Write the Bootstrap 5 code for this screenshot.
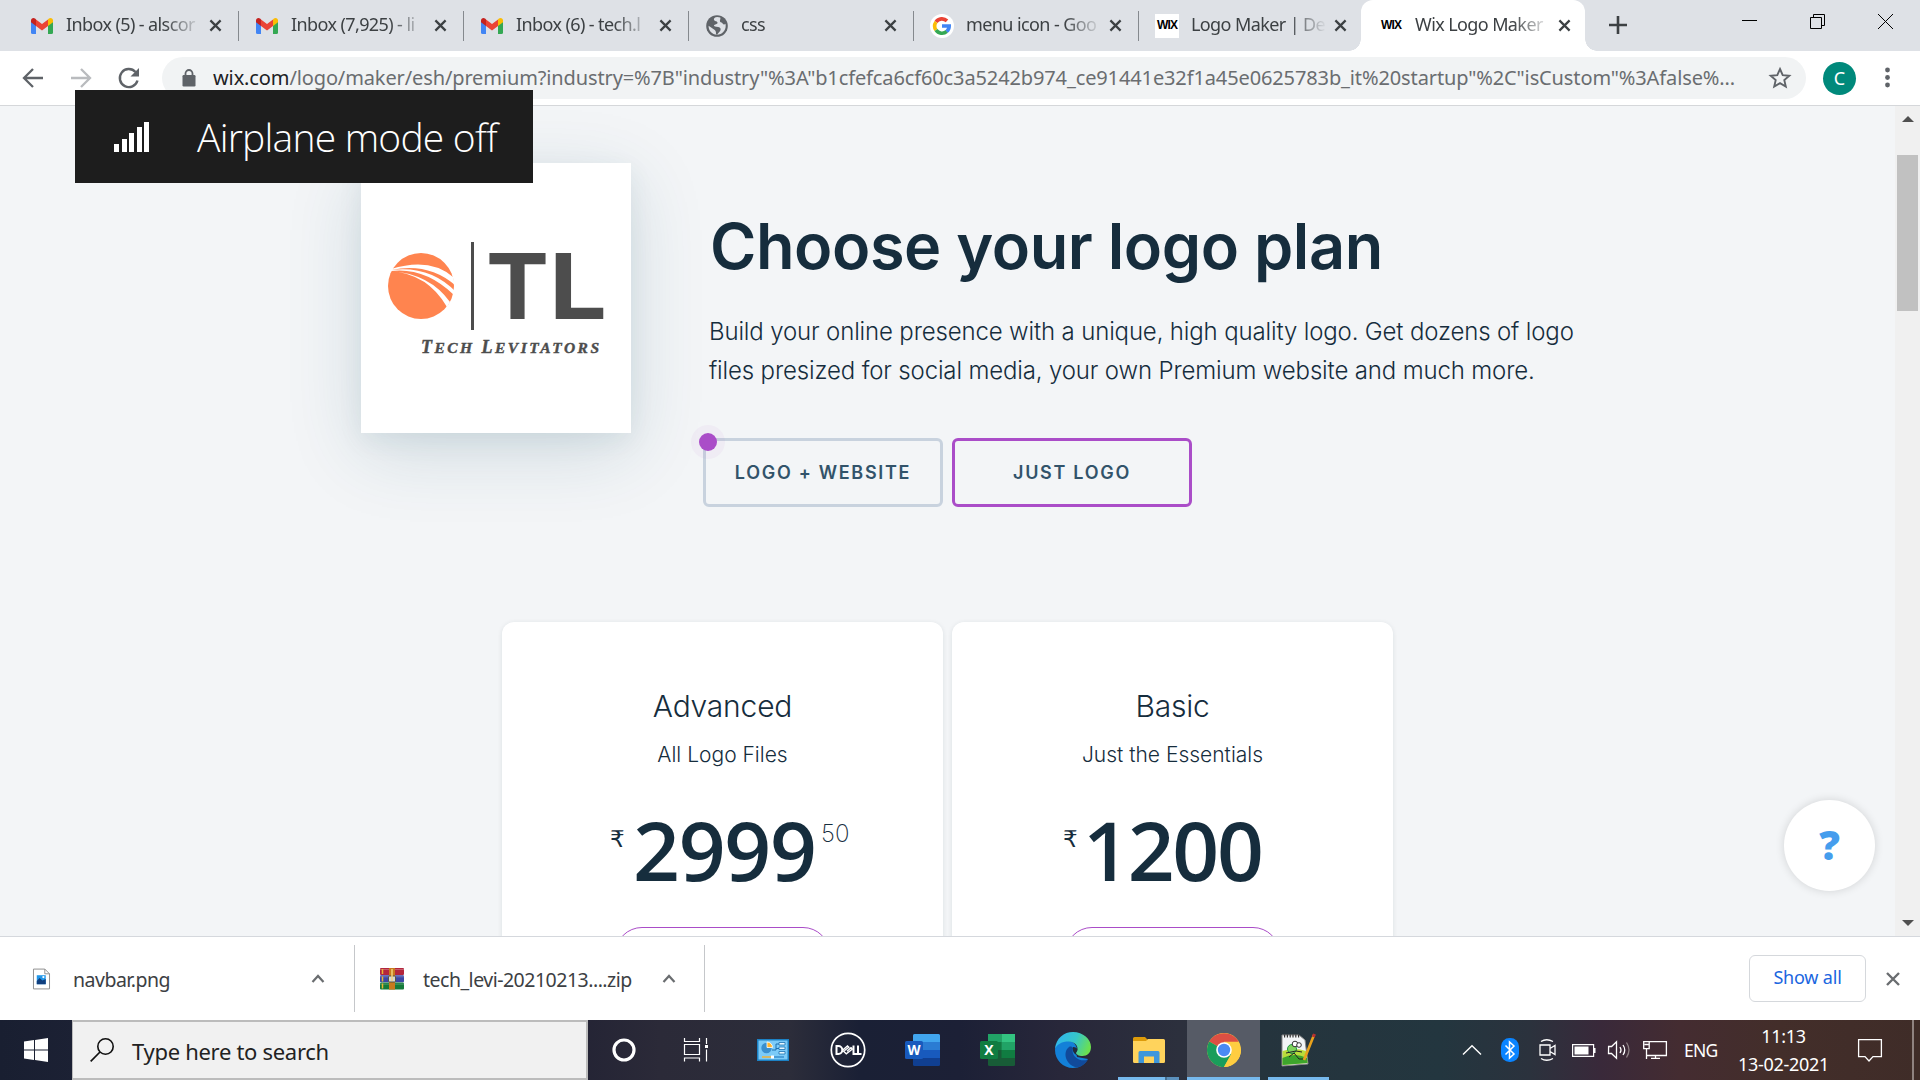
<!DOCTYPE html>
<html lang="en">
<head>
<meta charset="utf-8">
<title>Wix Logo Maker</title>
<link href="https://cdn.jsdelivr.net/npm/bootstrap@5.3.0/dist/css/bootstrap.min.css" rel="stylesheet">
<style>
body{width:1920px;height:1080px;overflow:hidden;font-family:"Noto Sans","Open Sans",sans-serif;background:#fff;color:#3c4043}
svg{display:block;flex:none;overflow:visible}
.tabstrip{height:51px;background:#dee1e6;padding-left:13px}
.tab-item{width:225px;height:51px;padding-left:18px;position:relative;font-size:18px;letter-spacing:-.6px;flex:none}
.tab-item .fav{width:24px;height:24px;margin-left:-1px;flex:none}
.tab-item .fav svg{margin:auto}
.tab-sep::after{content:"";position:absolute;right:-1px;top:11px;width:1.5px;height:30px;background:#85898e}
.tab-label{width:143px;flex:none;margin-left:12px;white-space:nowrap;line-height:30px;margin-top:-3px;-webkit-mask-image:linear-gradient(90deg,#000 98px,transparent 136px);mask-image:linear-gradient(90deg,#000 98px,transparent 136px)}
.tab-live{background:#fff;border-radius:12px 12px 0 0;width:224px;margin-left:-2px}
.tab-live .fav{margin-left:0}
.tab-live::before,.tab-live::after{content:"";position:absolute;bottom:0;width:12px;height:12px}
.tab-live::before{left:-12px;background:radial-gradient(circle at 0 0,transparent 11.5px,#fff 12px)}
.tab-live::after{right:-12px;background:radial-gradient(circle at 100% 0,transparent 11.5px,#fff 12px)}
.wixmark{width:24px;height:24px;background:#fff;color:#000;font:bold 12px/23px "Liberation Sans",sans-serif;letter-spacing:-.9px;text-align:center}
.win-ctl{gap:53px;padding-top:14px;margin-right:27px}
.toolbar{height:55px;border-bottom:1px solid #d5d7da;padding:0 19px 0 21px}
.nav-ico{gap:24px}
.omni{width:1644px;height:42px;background:#f1f3f4;border-radius:21px;padding:0 15px 0 19px;margin-left:21px;flex:none}
.url{font-size:20px;letter-spacing:-.122px;line-height:42px;margin-left:16px;color:#6a6d70;white-space:nowrap;width:1522px}
.url b{font-weight:400;color:#202124}
.avatar-c{width:33px;height:33px;border-radius:50%;background:#00897b;color:#fff;font-size:18px;line-height:32px;text-align:center;margin-left:17px;margin-right:29px;flex:none}
.viewport{height:830px;background:#f3f5f7;overflow:hidden;position:relative}
.page-body{width:1895px;height:830px;overflow:hidden;position:relative}
.vscroll{width:25px;height:830px;background:#f0f0f0;padding:10px 2px 10px 2px}
.thumb{width:21px;height:156px;background:#c1c1c1;margin-top:33px}
.hero{padding:57px 0 0 361px}
.logo-box{width:270px;height:270px;background:#fff;box-shadow:0 18px 70px rgba(22,80,105,.16),0 8px 24px rgba(22,80,105,.07)}
.hero-copy{margin-left:72px;padding-top:40px;color:#162d3d;font-family:Inter,"Noto Sans",sans-serif}
.hero-copy h1{font-size:63px;font-weight:600;line-height:86px;letter-spacing:-.45px;margin:0 0 0 7px;white-space:nowrap}
.hero-copy p{font-size:24px;font-weight:300;line-height:39px;letter-spacing:-.15px;margin:23px 0 0 6px;white-space:nowrap}
.plan-btns{margin-top:48px;gap:9px}
.plan-btn{width:240px;height:69px;border:3px solid #c8d2de;border-radius:6px;color:#32536a;font:600 18px/63px Inter,sans-serif;letter-spacing:1.7px;text-align:center;position:relative}
.plan-btn.on{border-color:#aa4dc8}
.dot{position:absolute;left:-7px;top:-8px;width:18px;height:18px;border-radius:50%;background:#aa4dc8;box-shadow:0 0 0 8px rgba(170,77,200,.05)}
.plans{padding:115px 0 0 502px;gap:9px}
.plan-card{width:441px;height:420px;background:#fff;border-radius:12px;box-shadow:0 1px 5px rgba(22,45,61,.1);padding-top:63px;color:#162d3d;font-family:Inter,"Noto Sans",sans-serif;font-weight:300}
.plan-card h2{font-size:30px;font-weight:300;line-height:42px;letter-spacing:-.2px;margin:0}
.plan-card .sub{font-size:21px;line-height:30px;margin-top:13px}
.price{margin-top:31px;height:110px;width:441px;padding-left:108px}
.price-b{padding-left:111px}
.price .cur{font:400 23px/30px "DejaVu Sans",sans-serif;padding-top:23px;width:14px}
.price .amt{font-family:"Open Sans",sans-serif;font-size:82px;font-weight:600;line-height:110px;letter-spacing:-1.2px;margin:-7px 0 0 9px;width:183px;white-space:nowrap}
.price-b .amt{letter-spacing:-2.2px;margin-left:6px}
.price .cents{font-size:24px;line-height:30px;padding-top:18px;margin-left:5px;font-weight:200}
.pill{width:215px;height:54px;border:1.5px solid #aa4dc8;border-radius:27px;margin:16px auto 0}
.help{position:absolute;left:1784px;top:694px;width:91px;height:91px;border-radius:50%;background:#fff;box-shadow:0 0 10px rgba(0,0,0,.14);color:#459ded;font:800 41px/89px "Open Sans",sans-serif;text-align:center}
.shelf{height:84px;border-top:1px solid #d5d8dd;font-size:19.5px;padding-right:20px}
.dl{height:67px;letter-spacing:-.5px}
.dl .fname{padding-top:2px}
.dl-a{width:355px;border-right:1px solid #c5c7ca;padding:0 29px 0 33px}
.dl-a .fname{margin-left:23px}
.dl-b{width:350px;border-right:1px solid #c5c7ca;padding:0 28px 0 25px}
.dl-b .fname{margin-left:19px}
.showall{width:117px;height:47px;border:1px solid #d5d8dc;border-radius:6px;color:#1a66e0;font-size:18px;letter-spacing:-.2px;line-height:43px;text-align:center;margin-right:20px}
.taskbar{height:60px;background:linear-gradient(90deg,#191f31 0,#1c2134 80px,#242435 580px,#2b2a38 660px,#2c2d3a 790px,#1a2035 860px,#1c2036 960px,#28273a 1060px,#2c303d 1180px,#25343d 1260px,#23363f 1440px,#2b323d 1530px,#39293a 1600px,#442c31 1680px,#432e2a 1780px,#3f2c28 1920px);color:#fff}
.start{width:72px}
.searchbox{width:516px;height:60px;background:#f1f1f1;border:2px solid #bcbcbc;border-left-width:1px;color:#222;padding-left:17px;font-size:22px;letter-spacing:-.3px}
.searchbox span{margin-left:18px;padding-top:2px}
.app{height:60px;flex:none;position:relative}
.app svg{margin:auto}
.w-a{width:72px}.w-b{width:82px}.w-c{width:68px}.w-d{width:81px}.w-e{width:69px}.w-f{width:61px}.w-g{width:73px}
.run::after{content:"";position:absolute;left:0;right:0;bottom:0;height:3px;background:#76b9ed}
.run-two::after{background:linear-gradient(90deg,#76b9ed 47px,#456f91 47px,#456f91 49px,#5b90bc 49px)}
.app.live{background:#565b66;margin:0 8px}
.tray{font-size:17.5px;flex:none}
.tray-ico{gap:12px;margin-right:17px}
.lang{letter-spacing:-.8px;width:34px}
.clock{width:95px;line-height:28px;text-align:center;font-size:18px;letter-spacing:-.3px;margin:0 27px 0 18px}
.peek{width:2px;height:60px;background:#8f8280;margin:0 6px 0 30px}
.toast-box{position:absolute;left:75px;top:90px;width:458px;height:93px;background:#1d1d1d;color:#fff;padding-left:39px;font-family:"Open Sans",sans-serif;font-weight:300;font-size:39px;letter-spacing:-.78px;z-index:5}
.toast-box span{margin-left:47px;padding-top:1px;white-space:nowrap}
</style>
</head>
<body class="d-flex flex-column">
<svg width="0" height="0" class="position-absolute">
<defs>
<symbol id="x" viewBox="0 0 14 14"><path d="M1.5 1.5l11 11M12.5 1.5l-11 11" stroke="#3c4043" stroke-width="2.4"/></symbol>
<symbol id="gmail" viewBox="0 0 22 16"><path d="M0 2v12.500A1.500 1.500 0 001.500 16H5V5z" fill="#4285f4"/><path d="M22 2v12.500A1.500 1.500 0 0120.500 16H17V5z" fill="#34a853"/><path d="M17 1.500V8l5-3.800V2.500C22 .2 19.500-.8 17.600.8z" fill="#fbbc04"/><path d="M5 8V1.500L11 6l6-4.500V8l-6 4.500z" fill="#ea4335"/><path d="M0 2.500V4.200L5 8V1.500L4.400.8C2.500-.8 0 .2 0 2.500z" fill="#c5221f"/></symbol>
<symbol id="up" viewBox="0 0 14 9"><path d="M1.500 8L7 2l5.500 6" fill="none" stroke="#6a6d70" stroke-width="2.200"/></symbol>
</defs></svg>

<header class="tabstrip d-flex">
<div class="tab-item tab-sep d-flex align-items-center"><div class="fav d-flex"><svg width="22" height="16"><use href="#gmail"/></svg></div><div class="tab-label">Inbox (5) - alscor</div><svg width="13" height="13"><use href="#x"/></svg></div>
<div class="tab-item tab-sep d-flex align-items-center"><div class="fav d-flex"><svg width="22" height="16"><use href="#gmail"/></svg></div><div class="tab-label">Inbox (7,925) - li</div><svg width="13" height="13"><use href="#x"/></svg></div>
<div class="tab-item tab-sep d-flex align-items-center"><div class="fav d-flex"><svg width="22" height="16"><use href="#gmail"/></svg></div><div class="tab-label">Inbox (6) - tech.l</div><svg width="13" height="13"><use href="#x"/></svg></div>
<div class="tab-item tab-sep d-flex align-items-center"><div class="fav d-flex"><svg width="22" height="22" viewBox="0 0 22 22"><circle cx="11" cy="11" r="10.800" fill="#5f6368"/><path d="M11.500 2c-3 0-4 1.500-3.500 3 .6 1.600 3 .8 3.500 2.400.4 1.500-2 1.700-3.200 2.600-1 .8 0 1.600 2 1.800 3 .2 4.500.6 4.300 3-.2 2-2.300 2.700-3.300 4.800l-1.300-.3c.2-2.500-.3-3.600-1.600-4.600L2.600 10.800C2.400 15.600 6 19.600 11 19.800c5-.2 8.700-4 8.700-8.800 0-.8-.1-1.500-.3-2.200-1 1-2.300.6-2.800-.4-.5-1.200-1.900-.5-2.500-1.600-.7-1.300.8-2.300.2-4.200z" fill="#dee1e6"/></svg></div><div class="tab-label">css</div><svg width="13" height="13"><use href="#x"/></svg></div>
<div class="tab-item tab-sep d-flex align-items-center"><div class="fav d-flex"><svg width="24" height="24" viewBox="0 0 24 24"><circle cx="12" cy="12" r="12" fill="#fff"/><g fill="none" stroke-width="3.600"><path d="M17 6.900A7.200 7.200 0 006 8" stroke="#ea4335"/><path d="M6 16.100a7.300 7.300 0 010-8.200" stroke="#fbbc04"/><path d="M16.800 17.400A7.200 7.200 0 016 16" stroke="#34a853"/><path d="M12 12h7.200c0 2.400-1 4.200-2.500 5.500" stroke="#4285f4"/></g></svg></div><div class="tab-label">menu icon - Goo</div><svg width="13" height="13"><use href="#x"/></svg></div>
<div class="tab-item d-flex align-items-center"><div class="wixmark fav">WIX</div><div class="tab-label">Logo Maker | De</div><svg width="13" height="13"><use href="#x"/></svg></div>
<div class="tab-item tab-live d-flex align-items-center"><div class="wixmark fav">WIX</div><div class="tab-label">Wix Logo Maker</div><svg width="13" height="13"><use href="#x"/></svg></div>
<svg class="ms-4 mt-3" width="18" height="18" viewBox="0 0 18 18"><path d="M9 0v18M0 9h18" stroke="#3c4043" stroke-width="2.600"/></svg>
<div class="win-ctl d-flex ms-auto">
<svg width="15" height="15"><path d="M0 6.500h15" stroke="#000"/></svg>
<svg width="15" height="15"><path d="M.5 3.500h11v11H.500zM3.500 3V.500h11v11H12" fill="none" stroke="#000"/></svg>
<svg width="15" height="15"><path d="M0 0l15 15M15 0L0 15" stroke="#000"/></svg>
</div>
</header>

<nav class="toolbar d-flex align-items-center">
<div class="nav-ico d-flex">
<svg width="24" height="24" viewBox="0 0 24 24"><path d="M22 12H3.500M12 3L3 12l9 9" fill="none" stroke="#5f6368" stroke-width="2.300"/></svg>
<svg width="24" height="24" viewBox="0 0 24 24"><path d="M2 12h18.500M12 3l9 9-9 9" fill="none" stroke="#b9bbbe" stroke-width="2.300"/></svg>
<svg width="24" height="24" viewBox="0 0 24 24"><path d="M20.500 14.500A9 9 0 1118.500 6" fill="none" stroke="#5f6368" stroke-width="2.400"/><path d="M22 2v8.500h-8.500z" fill="#5f6368"/></svg>
</div>
<div class="omni d-flex align-items-center">
<svg width="16" height="18" viewBox="0 0 16 18"><rect x="1.500" y="6" width="13" height="11.500" rx="1.200" fill="#5f6368"/><path d="M4.500 7V4.500a3.500 3.500 0 017 0V7" fill="none" stroke="#5f6368" stroke-width="1.800"/></svg>
<div class="url"><b>wix.com</b>/logo/maker/esh/premium?industry=%7B"industry"%3A"b1cfefca6cf60c3a5242b974_ce91441e32f1a45e0625783b_it%20startup"%2C"isCustom"%3Afalse%...</div>
<svg class="ms-auto" width="22" height="22" viewBox="0 0 22 22"><path d="M11 2l2.700 6.100 6.600.6-5 4.400 1.500 6.500L11 16.200l-5.800 3.400 1.500-6.500-5-4.400 6.600-.6z" fill="none" stroke="#5f6368" stroke-width="1.900"/></svg>
</div>
<div class="avatar-c">C</div>
<svg width="5" height="22"><g fill="#5f6368"><circle cx="2.500" cy="3" r="2.400"/><circle cx="2.500" cy="10.500" r="2.400"/><circle cx="2.500" cy="18" r="2.400"/></g></svg>
</nav>

<main class="viewport d-flex">
<div class="page-body">
<section class="hero d-flex">
<div class="logo-box"><svg width="270" height="270" viewBox="361 163 270 270">
<circle cx="421" cy="286" r="33" fill="#ff844f"/>
<path d="M391 269Q430 257 453 277L455 285Q428 262 391 270zM391 270Q430 265 456 292L454 295Q425 267 391 271zM391 271Q430 274 450 302L447 307Q428 274 391 271z" fill="#fff"/>
<rect x="471" y="242" width="3" height="88" fill="#4d4d4d"/>
<text x="486" y="319" font-family="Inter" font-weight="700" font-size="90.500" fill="#4d4d4d" textLength="63" lengthAdjust="spacingAndGlyphs">T</text>
<text x="549" y="319" font-family="Inter" font-weight="700" font-size="90.500" fill="#4d4d4d" textLength="58" lengthAdjust="spacingAndGlyphs">L</text>
<text x="421" y="353" font-family="Liberation Serif" font-style="italic" font-weight="700" fill="#4d4d4d" stroke="#4d4d4d" stroke-width=".4" font-size="18" textLength="178">T<tspan font-size="15.500">ECH</tspan> L<tspan font-size="15.500">EVITATORS</tspan></text>
</svg></div>
<div class="hero-copy">
<h1>Choose your logo plan</h1>
<p>Build your online presence with a unique, high quality logo. Get dozens of logo<br>files presized for social media, your own Premium website and much more.</p>
<div class="plan-btns d-flex"><div class="plan-btn"><span class="dot"></span>LOGO + WEBSITE</div><div class="plan-btn on">JUST LOGO</div></div>
</div>
</section>
<section class="plans d-flex">
<article class="plan-card text-center"><h2>Advanced</h2><div class="sub">All Logo Files</div>
<div class="price d-flex text-start"><span class="cur">₹</span><span class="amt">2999</span><span class="cents">50</span></div><div class="pill"></div></article>
<article class="plan-card text-center"><h2>Basic</h2><div class="sub">Just the Essentials</div>
<div class="price price-b d-flex text-start"><span class="cur">₹</span><span class="amt">1200</span></div><div class="pill"></div></article>
</section>
<div class="help">?</div>
</div>
<div class="vscroll d-flex flex-column align-items-center"><svg width="12" height="6"><path d="M0 6l6-6 6 6z" fill="#505050"/></svg><div class="thumb"></div><svg class="mt-auto" width="12" height="6"><path d="M0 0l6 6 6-6z" fill="#505050"/></svg></div>
</main>

<section class="shelf d-flex align-items-center">
<div class="dl dl-a d-flex align-items-center">
<svg width="17" height="22" viewBox="0 0 18 22"><path d="M.5.5h12l5 5v16H.500z" fill="#fff" stroke="#8a8a8a"/><path d="M12.500.500v5h5" fill="none" stroke="#8a8a8a"/><rect x="4" y="7" width="9.500" height="9.500" fill="#2196e8"/><path d="M4 13l3-3 3 2.500L13.500 11v5.500H4z" fill="#103f7e"/><circle cx="11" cy="9" r="1.200" fill="#fff"/></svg>
<span class="fname">navbar.png</span><svg class="ms-auto" width="14" height="9"><use href="#up"/></svg></div>
<div class="dl dl-b d-flex align-items-center">
<svg width="24" height="22" viewBox="0 0 24 22"><rect width="24" height="7" rx="1" fill="#b3263c"/><rect y="7.300" width="24" height="7" rx="1" fill="#3b46a5"/><rect y="14.600" width="24" height="7" rx="1" fill="#147a3a"/><path d="M0 1.500h24M0 8.800h24M0 16.100h24" stroke="#fff" stroke-opacity=".25"/><path d="M2.500 1v5M2.500 8.500v5M2.500 15.500v5" stroke="#e9b532" stroke-width="1.500"/><rect x="9" width="6" height="21.600" fill="#c87a1e"/><rect x="8.500" y="8" width="7" height="6" rx="1" fill="#d6d6d6" stroke="#554"/><path d="M12 1v12" stroke="#f3d27a" stroke-width="1.500"/></svg>
<span class="fname">tech_levi-20210213....zip</span><svg class="ms-auto" width="14" height="9"><use href="#up"/></svg></div>
<div class="showall ms-auto">Show all</div>
<svg width="14" height="14" viewBox="0 0 14 14"><path d="M1 1l12 12M13 1L1 13" stroke="#6a6d70" stroke-width="2.400"/></svg>
</section>

<footer class="taskbar d-flex align-items-center">
<div class="start app d-flex"><svg width="24" height="24" viewBox="0 0 24 24"><path d="M0 3.500l10-1.400v9.400H0zM11 2l13-2v11.500H11zM0 12.500h10v9.400L0 20.500zM11 12.500h13V24l-13-2z" fill="#fff"/></svg></div>
<div class="searchbox d-flex align-items-center"><svg width="24" height="24" viewBox="0 0 24 24"><circle cx="15.500" cy="8.500" r="7.700" fill="none" stroke="#111" stroke-width="1.600"/><path d="M10 14L.7 23.300" stroke="#111" stroke-width="1.700"/></svg><span>Type here to search</span></div>
<div class="app w-a d-flex"><svg width="24" height="24"><circle cx="12" cy="12" r="10" fill="none" stroke="#fff" stroke-width="3.200"/></svg></div>
<div class="app w-a d-flex"><svg width="24" height="24" viewBox="0 0 24 24"><path d="M.5 0v3.500h15V0M.5 6.500h15v10H.500zM.5 23.500v-3.500h15v3.500M22.500 0v6M22.500 11.500v12" fill="none" stroke="#fff" stroke-width="1.200"/><rect x="21" y="7" width="3" height="3" fill="#fff"/></svg></div>
<div class="app w-b d-flex"><svg width="32" height="22" viewBox="0 0 32 22"><rect x=".75" y=".75" width="30.500" height="20.500" fill="#7ccbf8" stroke="#1c81c4" stroke-width="1.500"/><circle cx="9.500" cy="9" r="5.200" fill="#3a8fce"/><path d="M10 8.500V3a5.500 5.500 0 015.500 5.500z" fill="#ffb52e" stroke="#fff" stroke-width=".8"/><path d="M15 11h4V5h3M19 9.500h3" stroke="#1c71b0" fill="none"/><path d="M22 3.500h6v2.500h-6zM22 8h6v2.500h-6zM22 12.500h6V15h-6z" fill="#e9f8ff" stroke="#1c71b0" stroke-width=".8"/><path d="M5 18h9" stroke="#efb23a" stroke-width="1.500"/><path d="M15 18h12" stroke="#3a8fce" stroke-width="1.500"/><rect x="14" y="16.500" width="3" height="3" fill="#fff"/></svg></div>
<div class="app w-c d-flex"><svg width="36" height="36" viewBox="0 0 36 36"><circle cx="18" cy="18" r="16.700" fill="none" stroke="#fff" stroke-width="1.700"/><g fill="none" stroke="#fff" stroke-width="2"><path d="M6.500 14v8h1.800a4 4 0 000-8zM23.500 13.500V22h3.500M28 13.500V22h3.500"/><path d="M12.500 18.300l5-4.300 1.300 1.200-4.500 3.600M12.800 18.600l3.500 3.200 6.500-5M17 19.200l4-3.500 1.500 1.200" stroke-width="1.400"/></g></svg></div>
<div class="app w-d d-flex"><svg width="35" height="32" viewBox="0 0 35 32"><rect x="8" width="27" height="32" rx="1.500" fill="#103f91"/><path d="M8 8h27V1.500A1.500 1.500 0 0033.500 0h-24A1.500 1.500 0 008 1.500z" fill="#41a5ee"/><rect x="8" y="8" width="27" height="8" fill="#2b7cd3"/><rect x="8" y="16" width="27" height="8" fill="#185abd"/><rect y="7" width="18" height="18" rx="1.500" fill="#185abd"/><text x="9" y="21" font-family="Open Sans" font-weight="700" font-size="13.500" fill="#fff" text-anchor="middle">W</text></svg></div>
<div class="app w-e d-flex"><svg width="35" height="32" viewBox="0 0 35 32"><rect x="8" width="27" height="32" rx="1.500" fill="#185c37"/><path d="M8 0h13.500v8H8z" fill="#21a366"/><path d="M21.500 0H35v8H21.500z" fill="#33c481"/><rect x="8" y="8" width="13.500" height="8" fill="#107c41"/><rect x="21.500" y="8" width="13.500" height="8" fill="#21a366"/><rect x="21.500" y="16" width="13.500" height="8" fill="#107c41"/><rect y="7" width="18" height="18" rx="1.500" fill="#107c41"/><text x="9" y="21" font-family="Open Sans" font-weight="700" font-size="14" fill="#fff" text-anchor="middle">X</text></svg></div>
<div class="app w-b d-flex"><svg width="36" height="36" viewBox="0 0 36 36"><defs><linearGradient id="e1" x1="0" x2="1" y1=".2" y2=".5"><stop offset="0" stop-color="#2fb4f0"/><stop offset=".55" stop-color="#36c6c9"/><stop offset="1" stop-color="#6be04f"/></linearGradient></defs><path d="M0 18C0 10 7 9 13 9s9 5 9 9l-1 3 1 4 11 2C29.500 33 24 36 18 36 8 36 0 28 0 18z" fill="#1380d8"/><path d="M0 17C1 6 9 0 18 0c10 0 18 7 18 15 0 6-4 9-8.500 9-4 0-6.500-1.500-6.500-3 0-1 1.500-1.700 1.500-4.500 0-4-4-7-9-7C7 9.500 2 12 0 17z" fill="url(#e1)"/><path d="M14 15c-4.500 3.500-4.500 10-1 15 3 4 7 5.700 10 5.400 4.500-1.400 8-4.400 10-8-4 1.500-8.500 1-11.500-1.500-3.500-2.500-4.500-6-3.500-10-1.500-1.500-2.500-1.700-4-.9z" fill="#114a9a"/><path d="M18 15c2.500 0 4.300 1 4.400 2.500 0 2-1.400 2.500-1.400 3.500s.5 1.500 1.500 2c-3-.5-5.500-3.500-4.500-8z" fill="#222a3a"/></svg></div>
<div class="app run run-two w-f ms-1 d-flex"><svg width="32" height="26" viewBox="0 0 32 26"><path d="M0 1.500A1.500 1.500 0 011.500 0H12l3 3v3H0z" fill="#dd9b0a"/><path d="M0 4h13l2-2h15.500A1.500 1.500 0 0132 3.500v21a1.500 1.500 0 01-1.500 1.500h-29A1.500 1.500 0 010 24.500z" fill="#ffd35c"/><path d="M5.500 26V15.500a1.500 1.500 0 011.500-1.500h18a1.500 1.500 0 011.500 1.500V26H21v-6.500H11V26z" fill="#3e97dc"/></svg></div>
<div class="app run live w-g d-flex"><svg width="34" height="34" viewBox="0 0 34 34"><circle cx="17" cy="17" r="17" fill="#ffcd40"/><path d="M17 17L2.300 8.500A17 17 0 0131.700 8.800H17z" fill="#dd4f43"/><path d="M17 17L2.300 8.500A17 17 0 0017 34l7.200-12.800z" fill="#1a9d5b"/><path d="M17 9h14.800L34 17a17 17 0 01-17 17l7-12.500z" fill="#ffcd40"/><circle cx="17" cy="17" r="7.800" fill="#fff"/><circle cx="17" cy="17" r="6.200" fill="#4a8af4"/></svg></div>
<div class="app run w-f d-flex"><svg width="35" height="32" viewBox="0 0 35 32"><path d="M1 1h17l6 5 3 24-26 2z" fill="#f2f5f7" stroke="#888"/><path d="M1.500 17q12-4 23.500 0l1.500 12L1.500 31z" fill="#b9dc3c"/><path d="M1.500 24q12-6 24.500 0l.5 5-25 2z" fill="#3da52c"/><path d="M3 2h16" stroke="#333" stroke-width="3" stroke-dasharray="1.200 1.600"/><circle cx="11" cy="15" r="4.500" fill="#7fd35b" stroke="#294"/><circle cx="14" cy="10" r="2.800" fill="#fff" stroke="#333"/><circle cx="18" cy="11" r="2.300" fill="#fff" stroke="#333"/><path d="M5 19l10-2 6 1M8 23l5-4 5 6h4" fill="none" stroke="#222"/><path d="M23 26L33 1" stroke="#e9a21c" stroke-width="2.600"/><path d="M32.300 3L33.500 0" stroke="#b93030" stroke-width="3"/></svg></div>
<div class="tray d-flex align-items-center ms-auto">
<div class="tray-ico d-flex align-items-center">
<svg class="me-1" width="18" height="10" viewBox="0 0 18 10"><path d="M0 9.500L9 .8l9 8.700" fill="none" stroke="#fff" stroke-width="1.400"/></svg>
<svg class="ms-1 me-2" width="18" height="24" viewBox="0 0 18 24"><rect width="18" height="24" rx="8.500" fill="#0a84ff"/><path d="M4.500 7.500l8.500 8.500-4.500 4V4l4.500 4-8.500 8.500" fill="none" stroke="#fff" stroke-width="1.500"/></svg>
<svg class="me-1" width="17" height="22" viewBox="0 0 17 22"><path d="M1 6h10v10H1zM11 9.500l5-3v9l-5-3M2 2.500q5.500-3.500 12 0M2 19.500q5.500 3.500 12 0" fill="none" stroke="#fff" stroke-width="1.300"/></svg>
<svg width="24" height="13" viewBox="0 0 24 13"><path d="M.6.600h21v11.800H.600z" fill="none" stroke="#fff" stroke-width="1.200"/><rect x="2.500" y="2.500" width="14" height="8" fill="#fff"/><rect x="22" y="4" width="1.500" height="5" fill="#fff"/></svg>
<svg width="23" height="18" viewBox="0 0 23 18"><path d="M.6 5.500h3L8.500.800v16.400l-5-4.700h-3zM12 6q2 3 0 6M15 4q3.500 5 0 10" fill="none" stroke="#fff" stroke-width="1.300"/><path d="M18.500 1.500q5 7.500 0 15" fill="none" stroke="#8d8084" stroke-width="1.300"/></svg>
<svg width="24" height="18" viewBox="0 0 24 18"><path d="M6 .700h17.400v13.800H3.500M12.500 14.500v3M8 17.400h9M.7.700h5.500v7H.700zM3.500 8v10M1.500 3.500h4" fill="none" stroke="#fff" stroke-width="1.300"/></svg>
</div>
<span class="lang">ENG</span>
<div class="clock"><div>11:13</div><div>13-02-2021</div></div>
<svg width="24" height="23" viewBox="0 0 24 23"><path d="M.6.600h22.800v17H15l-4 4.400-4-4.400H.600z" fill="none" stroke="#fff" stroke-width="1.300"/></svg>
<div class="peek"></div>
</div>
</footer>

<aside class="toast-box d-flex align-items-center"><svg width="36" height="30"><path d="M0 22h5v8H0zM8 17h5v13H8zM15 11h5v19h-5zM23 5h5v25h-5zM30 0h5v30h-5z" fill="#fff"/></svg><span>Airplane mode off</span></aside>
<script src="https://cdn.jsdelivr.net/npm/bootstrap@5.3.0/dist/js/bootstrap.bundle.min.js"></script>
</body>
</html>
